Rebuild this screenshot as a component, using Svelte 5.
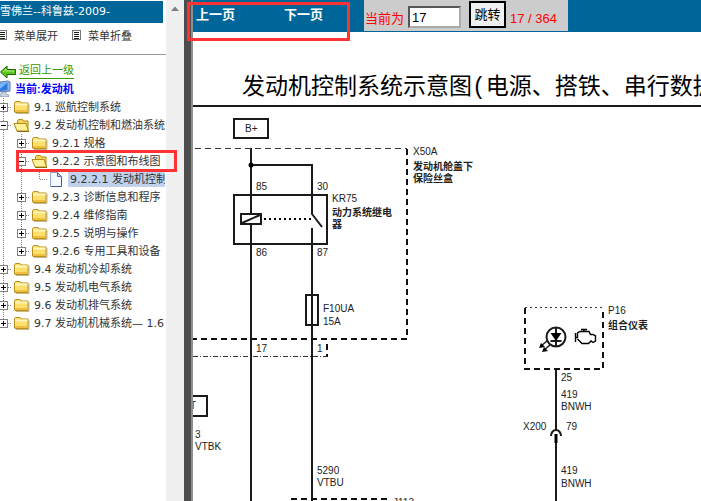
<script lang="ts">
  type Node = { label: string; level: number; kind: 'closed' | 'open' | 'page'; last?: boolean };

  const nodes: Node[] = [
    { label: '9.1 巡航控制系统', level: 0, kind: 'closed' },
    { label: '9.2 发动机控制和燃油系统', level: 0, kind: 'open' },
    { label: '9.2.1 规格', level: 1, kind: 'closed' },
    { label: '9.2.2 示意图和布线图', level: 1, kind: 'open' },
    { label: '9.2.2.1 发动机控制', level: 2, kind: 'page', last: true },
    { label: '9.2.3 诊断信息和程序', level: 1, kind: 'closed' },
    { label: '9.2.4 维修指南', level: 1, kind: 'closed' },
    { label: '9.2.5 说明与操作', level: 1, kind: 'closed' },
    { label: '9.2.6 专用工具和设备', level: 1, kind: 'closed', last: true },
    { label: '9.4 发动机冷却系统', level: 0, kind: 'closed' },
    { label: '9.5 发动机电气系统', level: 0, kind: 'closed' },
    { label: '9.6 发动机排气系统', level: 0, kind: 'closed' },
    { label: '9.7 发动机机械系统— 1.6', level: 0, kind: 'closed', last: true },
  ];

  const labels = [
    { x: 245, y: 132, text: 'B+' },
    { x: 256, y: 190, text: '85' },
    { x: 317, y: 190, text: '30' },
    { x: 256, y: 256, text: '86' },
    { x: 317, y: 256, text: '87' },
    { x: 413, y: 155, text: 'X50A' },
    { x: 332, y: 202, text: 'KR75' },
    { x: 323, y: 312, text: 'F10UA' },
    { x: 323, y: 325, text: '15A' },
    { x: 256, y: 352, text: '17' },
    { x: 317, y: 352, text: '1' },
    { x: 190, y: 409, text: 'T' },
    { x: 195, y: 438, text: '3' },
    { x: 195, y: 450, text: 'VTBK' },
    { x: 317, y: 474, text: '5290' },
    { x: 317, y: 486, text: 'VTBU' },
    { x: 393, y: 506, text: 'J113' },
    { x: 608, y: 314, text: 'P16' },
    { x: 561, y: 381, text: '25' },
    { x: 561, y: 398, text: '419' },
    { x: 561, y: 410, text: 'BNWH' },
    { x: 523, y: 430, text: 'X200' },
    { x: 566, y: 430, text: '79' },
    { x: 561, y: 474, text: '419' },
    { x: 561, y: 487, text: 'BNWH' },
  ];

  const names = [
    { x: 413, y: 170, text: '发动机舱盖下' },
    { x: 413, y: 182, text: '保险丝盒' },
    { x: 332, y: 216, text: '动力系统继电' },
    { x: 332, y: 228, text: '器' },
    { x: 608, y: 329, text: '组合仪表' },
  ];

  let page = $state('17');
  const total = 364;
</script>

{#snippet listIcon()}
  <svg width="9" height="10" viewBox="0 0 9 10" aria-hidden="true">
    <rect x="0.5" y="0.5" width="8" height="9" fill="#fff" stroke="#777" />
    <path d="M2 2.5h5M2 4.5h5M2 6.5h5M2 8.5h5" stroke="#222" />
  </svg>
{/snippet}

{#snippet joint(node: Node)}
  <svg width="18" height="18" viewBox="0 0 18 18" aria-hidden="true">
    <path d={node.last ? 'M9.5 0V9' : 'M9.5 0V18'} class="dots" />
    <path d="M10 9.5H18" class="dots" />
    {#if node.kind !== 'page'}
      <rect x="5.5" y="5.5" width="8" height="8" fill="#fff" stroke="#808080" />
      <path d="M7 9.5h5" stroke="#000" />
      {#if node.kind === 'closed'}<path d="M9.5 7v5" stroke="#000" />{/if}
    {/if}
  </svg>
{/snippet}

{#snippet nodeIcon(kind: string)}
  <svg width="18" height="18" viewBox="0 0 18 18" aria-hidden="true">
    {#if kind === 'page'}
      <path d="M2.5 2.5h7l4 4v10h-11z" fill="#f4f8ff" stroke="#8fa3cf" />
      <path d="M13.5 7v9.5H3" fill="none" stroke="#3f5b9d" />
      <path d="M9.5 2.5v4h4z" fill="#b9cdf2" stroke="#5571b3" />
    {:else if kind === 'open'}
      <path d="M5.5 14V5l1-1.5h4l1 1.5h4.5v9z" fill="#f3d35e" stroke="#b48a13" />
      <path d="M2 7.5h12l2.500 7.500H5z" fill="#fff09a" stroke="#b48a13" />
      <path d="M5 15.5h12" stroke="#8d6b10" />
    {:else}
      <path d="M2.5 14V5l1-1.5h4.500l1 1.5h7v9.500h-13z" fill="#ffdf6b" stroke="#b8901c" />
      <path d="M3 6.5h12.500" stroke="#fff6bd" stroke-width="2" />
      <path d="M3 13h12.500" stroke="#efc040" stroke-width="2" />
      <path d="M4 15.5h13V6" fill="none" stroke="#a58a43" opacity="0.6" />
    {/if}
  </svg>
{/snippet}

<div class="app">
  <aside class="sidebar">
    <h1>雪佛兰--科鲁兹-2009-</h1>
    <div class="tools">
      <button type="button">{@render listIcon()}菜单展开</button>
      <button type="button">{@render listIcon()}菜单折叠</button>
    </div>
    <hr />
    <div class="line back">
      <svg width="16" height="14" viewBox="0 0 16 14" aria-hidden="true">
        <path d="M0.5 7L7 1v3.500h8.500v5H7V13z" fill="#59c61b" stroke="#1c5f06" />
        <path d="M3 7l3-3v2h8.500" fill="none" stroke="#b6f078" />
      </svg>
      <a href="#back">返回上一级</a>
    </div>
    <div class="line current">
      <svg width="11" height="18" viewBox="0 0 11 18" aria-hidden="true">
        <path d="M0 2l8-1 2 1v9l-9 1-1-1z" fill="#8fb4ea" stroke="#5878b0" />
        <path d="M0 4l7.500-1v7L0 11z" fill="#2d79e2" />
        <path d="M0 4l7-1L0 9z" fill="#79b7ff" />
        <path d="M2 12h4v2l3 1v1.500H0V14h2z" fill="#c9d3e3" stroke="#8290aa" stroke-width="0.6" />
      </svg>
      <strong>当前:发动机</strong>
    </div>
    <ul class="tree">
      {#each nodes as node}
        <li>
          {#each { length: node.level } as _}
            <svg width="18" height="18" viewBox="0 0 18 18" aria-hidden="true">
              <path d="M9.5 0V18" class="dots" />
            </svg>
          {/each}
          {@render joint(node)}
          {@render nodeIcon(node.kind)}
          <a href="#node" class:selected={node.kind === 'page'}>{node.label}</a>
        </li>
      {/each}
    </ul>
    <div class="mark mark-node"></div>
  </aside>

  <div class="scroll" aria-hidden="true">
    <svg width="8" height="5" viewBox="0 0 8 5"><path d="M0 5L4 0.5 8 5z" fill="#808080" /></svg>
  </div>
  <div class="splitter"></div>

  <main>
    <header>
      <nav>
        <a href="#prev">上一页</a>
        <a href="#next">下一页</a>
      </nav>
      <form class="jump" onsubmit={(e) => e.preventDefault()}>
        <label for="page">当前为</label>
        <input id="page" type="text" bind:value={page} />
        <button type="submit">跳转</button>
        <span>17 / {total}</span>
      </form>
      <div class="mark mark-nav"></div>
    </header>

    <div class="sheet">
      <svg width="620" height="520" viewBox="193 32 620 520" role="img" aria-label="发动机控制系统示意图">
        <text x="242" y="94" class="title">发动机控制系统示意图(电源、搭铁、串行数据</text>

        <g class="wire">
          <path d="M193 106H813" />
          <rect x="234" y="119" width="34" height="19" />
          <path d="M251 148V214M251 224V552" />
          <path d="M251 165H312V214L322 227M312 228V552" />
          <rect x="234" y="195" width="93" height="49" />
          <rect x="241" y="214" width="20" height="10" />
          <path d="M242 223L260 215" />
          <rect x="306" y="295" width="12" height="30" />
          <rect x="160" y="396" width="47" height="20" />
          <path d="M556 369V430M556 434V552" />
          <path d="M551 436a5 6 0 0 1 10 0" />
        </g>
        <circle cx="251" cy="165" r="2.5" />
        <path d="M556 434V443" stroke="#000" stroke-width="3" />
        <path d="M264 219H312" stroke="#000" stroke-width="2" stroke-dasharray="2 3" />

        <g class="dash">
          <path d="M407 149V339" />
          <path d="M407 339H193" />
          <path d="M327 344V357" />
          <path d="M292 530V499H386V530" />
          <path d="M525 308V369H603V308" />
        </g>
        <path d="M195 148.5H407" class="thin" stroke-dasharray="6 4" />
        <path d="M193 356.5H327" class="thin" stroke-dasharray="5 2 1 2" />
        <path d="M525 307.5H603" class="thin" stroke-dasharray="2 3" />

        <!-- indicator lamp -->
        <g class="wire">
          <circle cx="556" cy="337" r="9.5" />
          <path d="M556 327V347M550.5 341H561.5" />
          <path d="M547 341L541 346M550 345L544 350" stroke-width="1.5" />
        </g>
        <path d="M550.5 333H561.5L556 341z" />
        <path d="M539 348L541 343 545 347zM542 352L544 347 548 351z" />

        <!-- engine symbol -->
        <path
          d="M575.5 333V342M575.5 337.5H577.5V333L580 331.5H589L590.5 334.5H593L595.5 336V341L593 342.5 591 341 588.5 343.5H582L577.5 339M581 329.5H587M584 329.5V331.5"
          fill="none" stroke="#000" stroke-width="1.4" />

        {#each labels as label}
          <text x={label.x} y={label.y} class="label">{label.text}</text>
        {/each}
        {#each names as name}
          <text x={name.x} y={name.y} class="name">{name.text}</text>
        {/each}
      </svg>
    </div>
  </main>
</div>

<style>
  :global(body) {
    overflow: hidden;
    background: #fff;
  }
  .app {
    display: flex;
    height: 100vh;
    font-family: 'DejaVu Sans', 'Noto Sans CJK SC', sans-serif;
    font-size: 11px;
    color: #333;
  }
  .sidebar {
    position: relative;
    flex: 0 0 166px;
    min-width: 0;
  }
  h1 {
    margin: 1px 3px 0 0;
    height: 22px;
    line-height: 21px;
    font-size: 11px;
    font-weight: 400;
    color: #fff;
    background: #006699;
    white-space: nowrap;
  }
  .tools {
    display: flex;
    gap: 14px;
    height: 24px;
    margin-left: -2px;
  }
  .tools button {
    display: flex;
    align-items: center;
    gap: 7px;
    padding: 0;
    border: 0;
    background: none;
    font: inherit;
    color: inherit;
    white-space: nowrap;
  }
  hr {
    height: 1px;
    margin: 7px 0;
    border: 0;
    background: #999;
  }
  .line {
    display: flex;
    align-items: center;
    height: 18px;
    line-height: 18px;
  }
  .back {
    gap: 3px;
  }
  .back svg {
    margin-top: 2px;
  }
  .back a {
    height: 15px;
    line-height: 15px;
    color: #339900;
    text-decoration: none;
    border-bottom: 1px solid #339900;
  }
  .current {
    gap: 4px;
    color: #0000ff;
  }
  .current strong {
    font-family: 'Liberation Sans', 'Noto Sans CJK SC', sans-serif;
    line-height: 20px;
  }
  .tree {
    margin: 0 1px 0 0;
    padding: 0;
    list-style: none;
    overflow: hidden;
  }
  .tree li {
    display: flex;
    height: 18px;
    margin-left: -6px;
  }
  .tree svg {
    flex: none;
  }
  .tree a {
    height: 18px;
    margin-left: 2px;
    padding: 0 2px;
    line-height: 20px;
    color: inherit;
    text-decoration: none;
    white-space: nowrap;
  }
  .tree a.selected {
    height: 16px;
    margin-top: 1px;
    line-height: 18px;
    background: #c0d2ec;
  }
  .dots {
    stroke: #808080;
    stroke-dasharray: 1 1;
  }
  .scroll {
    flex: 0 0 18px;
    display: flex;
    justify-content: center;
    padding-top: 6px;
    box-sizing: border-box;
    background: #f0f0f0;
  }
  .splitter {
    flex: 0 0 7px;
    background: #4d4d4d;
    border-right: 2px solid #8f8f8f;
  }
  main {
    flex: 1;
    min-width: 0;
    display: flex;
    flex-direction: column;
  }
  header {
    position: relative;
    display: flex;
    height: 32px;
    background: #006699;
    font-family: 'Liberation Sans', 'Noto Sans CJK SC', sans-serif;
    font-size: 13px;
  }
  nav {
    display: flex;
    flex: 0 0 171px;
    gap: 49px;
    padding-left: 3px;
    box-sizing: border-box;
    line-height: 30px;
  }
  nav a {
    color: #fff;
    font-weight: 700;
    text-decoration: none;
  }
  .jump {
    display: flex;
    align-items: flex-start;
    height: 31px;
    width: 204px;
    padding-left: 1px;
    box-sizing: border-box;
    color: #f00;
    background: #ccc;
    white-space: nowrap;
  }
  .jump label,
  .jump span {
    line-height: 38px;
  }
  .jump input {
    width: 53px;
    height: 22px;
    margin: 6px 8px 0 4px;
    padding: 0 2px;
    box-sizing: border-box;
    border: 2px inset #aaa;
    background: #fff;
    font: inherit;
    color: #000;
  }
  .jump button {
    width: 37px;
    height: 27px;
    margin: 1px 4px 0 0;
    padding: 0;
    border: 2px solid #000;
    background: #f0f0f0;
    font: inherit;
    line-height: 20px;
    color: #000;
  }
  .sheet {
    flex: 1;
    min-height: 0;
    overflow: hidden;
  }
  .sheet svg {
    display: block;
  }
  .wire {
    fill: none;
    stroke: #1a1a1a;
    stroke-width: 2;
  }
  .dash {
    fill: none;
    stroke: #111;
    stroke-width: 2;
    stroke-dasharray: 6 4;
  }
  .thin {
    stroke: #333;
    stroke-width: 1;
  }
  .title {
    font-family: 'Liberation Mono', 'Noto Sans CJK SC', sans-serif;
    font-size: 23px;
    fill: #000;
  }
  .label {
    font-family: 'Liberation Sans', sans-serif;
    font-size: 10px;
    fill: #222;
  }
  .name {
    font-family: 'Liberation Sans', 'Noto Sans CJK SC', sans-serif;
    font-size: 10px;
    font-weight: 700;
    fill: #222;
  }
  .mark {
    position: absolute;
    box-sizing: border-box;
    border: 3px solid #ff3333;
    pointer-events: none;
    z-index: 1;
  }
  .mark-node {
    left: 16px;
    top: 150px;
    width: 161px;
    height: 22px;
  }
  .mark-nav {
    left: -6px;
    top: 2px;
    width: 163px;
    height: 39px;
  }
</style>
